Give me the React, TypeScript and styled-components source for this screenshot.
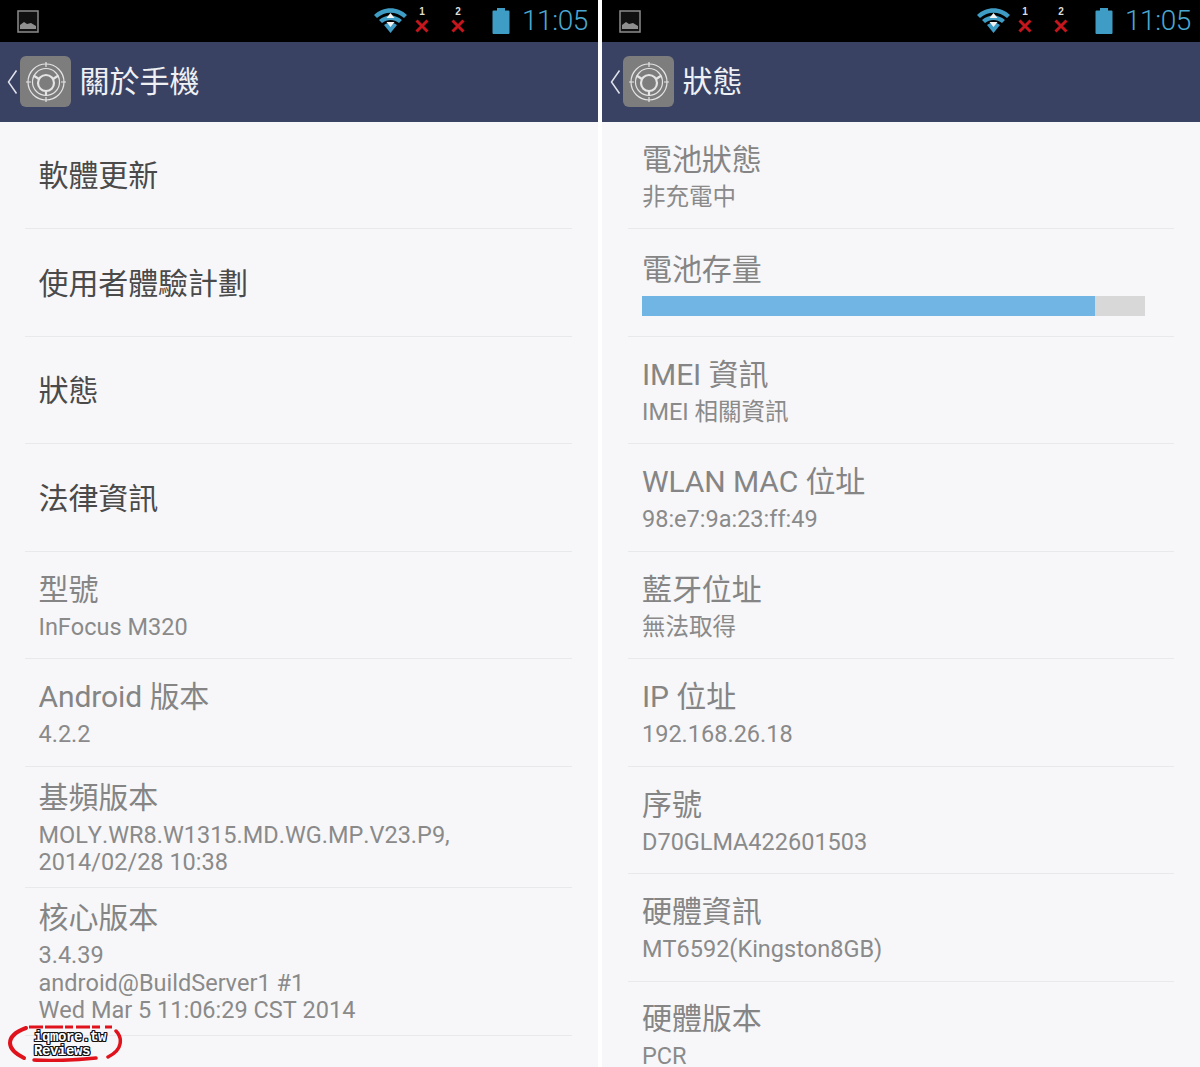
import React from "react";
import styled, { createGlobalStyle } from "styled-components";

const Global = createGlobalStyle`
  html, body { margin: 0; padding: 0; background: #fff; }
  #root { width: 1200px; height: 1067px; overflow: hidden; }
`;
const FONT = `Roboto, "Noto Sans CJK TC", "Noto Sans", sans-serif`;

const Root = styled.div`
  position: relative;
`;
const Page = styled.div`
  display: flex; gap: 4px; width: 1200px; height: 1067px; overflow: hidden; font-family: ${FONT};
`;
const Phone = styled.div`
  flex: 0 0 598px; display: flex; flex-direction: column; background: #f7f7f9; height: 1067px; overflow: hidden;
`;
const StatusBar = styled.div`
  flex: 0 0 42px; background: #000; display: flex; align-items: center; padding: 0 10px 0 17px;
`;
const StatusRight = styled.div<{ $second?: boolean }>`
  margin-left: auto; display: flex; align-items: center; margin-right: ${p => (p.$second ? -1 : 0)}px;
`;
const Clock = styled.span`
  font-size: 28px; font-weight: 300; line-height: 42px; color: #4aa8d0; margin-left: 12px; letter-spacing: -0.4px; font-kerning: none;
`;
const SimSlot = styled.div`
  position: relative; width: 36px; height: 42px; display: flex; justify-content: center;
`;
const SimNum = styled.span`
  position: absolute; top: 7px; left: 0; right: 0; text-align: center; font-size: 10px; line-height: 10px; font-weight: 700; color: #ddd; font-family: "Liberation Sans", sans-serif;
`;
const ActionBar = styled.div<{ $second?: boolean }>`
  flex: 0 0 80px; background: #3a4263; display: flex; align-items: center; padding: 0 0 1px ${p => (p.$second ? 8 : 7)}px; box-sizing: border-box;
`;
const AppIcon = styled.div`
  width: 51px; height: 51px; margin-left: 2px; border-radius: 6px; background: #7d7d7d; display: flex; align-items: center; justify-content: center;
`;
const BarTitle = styled.h1`
  margin: 0 0 0 8.5px; font-weight: 400; font-size: 30px; line-height: 40px; color: #eef0f4;
`;
const List = styled.div<{ $second?: boolean }>`
  flex: 1; display: flex; flex-direction: column; padding: 0 26px 0 ${p => (p.$second ? 26 : 25)}px; min-height: 0;
`;
const Row = styled.div<{ $tall?: number; $second?: boolean }>`
  flex: 0 0 ${p => p.$tall ?? 107.45}px; box-sizing: border-box; border-bottom: 1px solid #e8e9eb; padding: 2px 0 0 ${p => (p.$second ? 14 : 13.5)}px;
  display: flex; flex-direction: column; justify-content: center;
`;
const Title = styled.div<{ $strong?: boolean }>`
  font-size: 30px; line-height: 38px; color: ${p => (p.$strong ? "#4a4a4a" : "#858585")}; white-space: nowrap; letter-spacing: -0.1px;
`;
const Summary = styled.div`
  font-size: 23.5px; line-height: 27.5px; color: #8a8a8a; white-space: pre-line; margin-top: 5px; font-kerning: none;
`;
const Meter = styled.div`
  width: 503px; height: 20px; background: #d8d8d8; margin-top: 7px;
`;
const MeterFill = styled.div`
  height: 100%; background: #70b5e3;
`;
const Watermark = styled.div`
  position: absolute; left: 8px; top: 1024px; width: 115px; height: 38px;
`;
const WmText = styled.div<{ $line: number }>`
  position: absolute; left: 26px; top: ${p => (p.$line ? 20 : 6)}px;
  font: 700 14px/14px "Liberation Mono", "DejaVu Sans Mono", monospace; color: #fff; letter-spacing: -0.4px;
  text-shadow: 1px 0 0 #111, -1px 0 0 #111, 0 1px 0 #111, 0 -1px 0 #111, 1px 1px 0 #111, -1px -1px 0 #111, 1px -1px 0 #111, -1px 1px 0 #111;
`;
const WmRing = styled.svg`
  position: absolute; inset: 0;
`;

const Gallery = () => (
  <svg width="22" height="23" viewBox="0 0 22 23">
    <rect x="1" y="1" width="20" height="21" fill="#111" stroke="#8c8c8c" strokeWidth="1.5" />
    <path d="M3 19v-4l4-3 3 2 4-1 5 3v3z" fill="#8f8f8f" />
  </svg>
);
const Wifi = () => (
  <svg width="33" height="25" viewBox="0 0 33 25" style={{ marginRight: -3, marginBottom: 2 }}>
    <path d="M0 7C9-2 24-2 33 7l-3 3C22 3 11 3 3 10z" fill="#3f9cc4" />
    <path d="M5 12c7-6 16-6 23 0l-3 3c-5-4-12-4-17 0z" fill="#3f9cc4" />
    <path d="M10 17c4-3 9-3 13 0l-6.500 8z" fill="#3f9cc4" />
    <path d="M16.500 5l4 5h-8zM16.500 19l-4-5h8z" fill="#f2f2f2" />
  </svg>
);
const Cross = () => (
  <svg width="14" height="14" viewBox="0 0 14 14" style={{ marginTop: 19 }}>
    <path d="M1.500 1.500l11 11M12.500 1.500l-11 11" stroke="#c4161c" strokeWidth="3" />
  </svg>
);
const Battery = () => (
  <svg width="18" height="26" viewBox="0 0 18 26" style={{ marginLeft: 16 }}>
    <path d="M5 0h8v2.500h3.500a1 1 0 0 1 1 1V25a1 1 0 0 1-1 1H1.500a1 1 0 0 1-1-1V3.500a1 1 0 0 1 1-1H5z" fill="#3f9cc4" />
  </svg>
);
const Chevron = () => (
  <svg width="11" height="26" viewBox="0 0 11 26">
    <path d="M9.500 1.500L1.500 13l8 11.500" fill="none" stroke="#dfe2ea" strokeWidth="1.500" />
  </svg>
);
const SettingsGlyph = () => (
  <svg width="42" height="42" viewBox="0 0 42 42" fill="none" stroke="#e4e4e4">
    <circle cx="21" cy="21" r="18" strokeWidth="1.200" />
    <circle cx="21" cy="21" r="13.500" strokeWidth="1.200" />
    <circle cx="21" cy="22" r="8" strokeWidth="2.200" />
    <path d="M21 1v5M21 36v5M1 21h5M36 21h5" strokeWidth="1.200" />
    <path d="M14 18l-5.500-3.500M28 18l5.500-3.500M21 30v4.500" strokeWidth="2.200" />
  </svg>
);

const Header = ({ title, second }: { title: string; second?: boolean }) => (
  <>
    <StatusBar>
      <Gallery />
      <StatusRight $second={second}>
        <Wifi />
        <SimSlot><SimNum>1</SimNum><Cross /></SimSlot>
        <SimSlot><SimNum>2</SimNum><Cross /></SimSlot>
        <Battery />
        <Clock>11:05</Clock>
      </StatusRight>
    </StatusBar>
    <ActionBar $second={second}>
      <Chevron />
      <AppIcon><SettingsGlyph /></AppIcon>
      <BarTitle>{title}</BarTitle>
    </ActionBar>
  </>
);

const left: { t: string; s?: string; strong?: boolean; h?: number }[] = [
  { t: "軟體更新", strong: true },
  { t: "使用者體驗計劃", strong: true },
  { t: "狀態", strong: true },
  { t: "法律資訊", strong: true },
  { t: "型號", s: "InFocus M320" },
  { t: "Android 版本", s: "4.2.2" },
  { t: "基頻版本", s: "MOLY.WR8.W1315.MD.WG.MP.V23.P9,\n2014/02/28 10:38", h: 121 },
  { t: "核心版本", s: "3.4.39\nandroid@BuildServer1 #1\nWed Mar 5 11:06:29 CST 2014", h: 148 },
  { t: "版本號碼" },
];
const right: { t: string; s?: string }[] = [
  { t: "電池狀態", s: "非充電中" },
  { t: "電池存量" },
  { t: "IMEI 資訊", s: "IMEI 相關資訊" },
  { t: "WLAN MAC 位址", s: "98:e7:9a:23:ff:49" },
  { t: "藍牙位址", s: "無法取得" },
  { t: "IP 位址", s: "192.168.26.18" },
  { t: "序號", s: "D70GLMA422601503" },
  { t: "硬體資訊", s: "MT6592(Kingston8GB)" },
  { t: "硬體版本", s: "PCR" },
];

export default function App() {
  return (
    <Root>
      <Global />
      <Page>
        <Phone>
          <Header title="關於手機" />
          <List>
            {left.map(r => (
              <Row key={r.t} $tall={r.h}>
                <Title $strong={r.strong}>{r.t}</Title>
                {r.s && <Summary>{r.s}</Summary>}
              </Row>
            ))}
          </List>
        </Phone>
        <Phone>
          <Header title="狀態" second />
          <List $second>
            {right.map(r => (
              <Row key={r.t} $second>
                <Title>{r.t}</Title>
                {r.s && <Summary>{r.s}</Summary>}
                {r.t === "電池存量" && (
                  <Meter><MeterFill style={{ width: "90%" }} /></Meter>
                )}
              </Row>
            ))}
          </List>
        </Phone>
      </Page>
      <Watermark>
        <WmRing width="115" height="38" viewBox="0 0 115 38">
          <path d="M18 4C7 8 2 13 2 19c0 6 6 11 14 15" fill="none" stroke="#e0121c" strokeWidth="4" strokeLinecap="round" />
          <path d="M21 3h44M68 3h24M97 3h7" fill="none" stroke="#e0121c" strokeWidth="3" strokeDasharray="14 2 18 2" />
          <path d="M108 7c4 4 5 8 4 13-1 6-6 10-12 13" fill="none" stroke="#e0121c" strokeWidth="3.500" strokeLinecap="round" />
          <path d="M26 36c18 1 42 0 62-2" fill="none" stroke="#e0121c" strokeWidth="3.500" strokeLinecap="round" />
        </WmRing>
        <WmText $line={0}>iqmore.tw</WmText>
        <WmText $line={1}>Reviews</WmText>
      </Watermark>
    </Root>
  );
}
